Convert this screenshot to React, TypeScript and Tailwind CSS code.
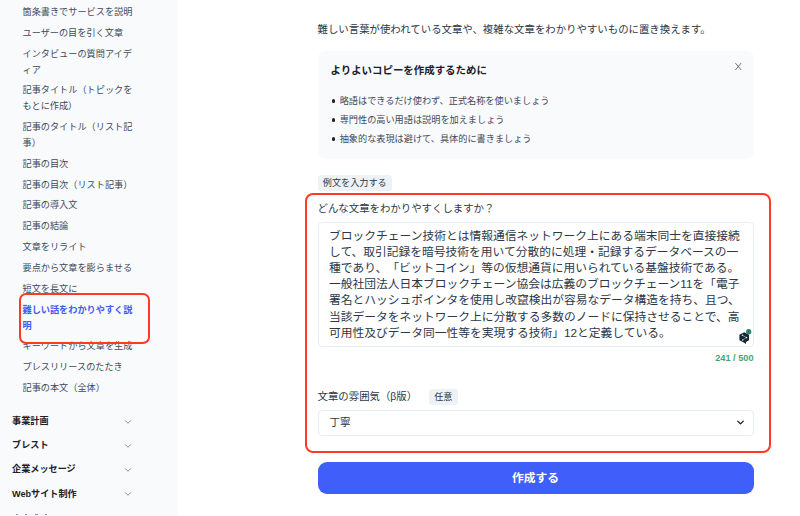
import { useState } from 'react';
import { ChevronDown } from 'lucide-react';

const menuItems = [
  ['箇条書きでサービスを説明'],
  ['ユーザーの目を引く文章'],
  ['インタビューの質問アイデ', 'ィア'],
  ['記事タイトル（トピックを', 'もとに作成）'],
  ['記事のタイトル（リスト記', '事）'],
  ['記事の目次'],
  ['記事の目次（リスト記事）'],
  ['記事の導入文'],
  ['記事の結論'],
  ['文章をリライト'],
  ['要点から文章を膨らませる'],
  ['短文を長文に'],
  ['難しい話をわかりやすく説', '明'],
  ['キーワードから文章を生成'],
  ['プレスリリースのたたき'],
  ['記事の本文（全体）'],
];

const menuGroups = ['事業計画', 'ブレスト', '企業メッセージ', 'Webサイト制作'];

const tips = [
  '略語はできるだけ使わず、正式名称を使いましょう',
  '専門性の高い用語は説明を加えましょう',
  '抽象的な表現は避けて、具体的に書きましょう',
];

const sampleText = [
  'ブロックチェーン技術とは情報通信ネットワーク上にある端末同士を直接接続',
  'して、取引記録を暗号技術を用いて分散的に処理・記録するデータベースの一',
  '種であり、「ビットコイン」等の仮想通貨に用いられている基盤技術である。',
  '一般社団法人日本ブロックチェーン協会は広義のブロックチェーン11を「電子',
  '署名とハッシュポインタを使用し改竄検出が容易なデータ構造を持ち、且つ、',
  '当該データをネットワーク上に分散する多数のノードに保持させることで、高',
  '可用性及びデータ同一性等を実現する技術」12と定義している。',
].join('\n');

const Sidebar = () => {
  const [active, setActive] = useState(12);

  return (
    <aside className="relative w-[178px] h-full shrink-0 overflow-hidden bg-[#f8fafc]">
      <ul className="pl-[22.5px] pt-[2.5px] text-[9.17px] leading-[15.7px] text-[#3f495a]">
        {menuItems.map((lines, index) => (
          <li
            key={index}
            onClick={() => setActive(index)}
            className={`py-[2.6px] whitespace-pre cursor-pointer ${
              active === index ? 'font-bold text-[#4059f5]' : ''
            }`}
          >
            {lines.join('\n')}
          </li>
        ))}
      </ul>

      <ul className="mt-[10.2px] pl-3 pr-[45px] text-[9.15px] font-bold text-[#1a202c]">
        {menuGroups.map((group) => (
          <li key={group} className="flex h-[24.2px] items-center justify-between whitespace-nowrap">
            {group}
            <ChevronDown className="size-[10px] text-[#718096]" strokeWidth={2.2} />
          </li>
        ))}
        {/* Top edge of the next group, cut by the viewport */}
        <li className="flex h-[24.2px] gap-[7.5px] pl-[3.5px] pt-[7.8px]">
          <span className="h-px w-0.5 bg-[#8b93a1]" />
          <span className="h-px w-0.5 bg-[#8b93a1]" />
          <span className="h-px w-[3px] bg-[#8b93a1]" />
          <span className="h-px w-0.5 bg-[#8b93a1]" />
        </li>
      </ul>

      {/* Highlight around the current item */}
      <div className="absolute left-[19px] top-[293px] h-[51px] w-[131px] rounded-[7px] border-2 border-[#ff3a22]" />
    </aside>
  );
};

const TipsCard = () => (
  <div className="mt-[11.5px] h-[108.5px] rounded-[7px] bg-[#f8fafc] pl-[13px] pr-[12px]">
    <div className="flex justify-between">
      <h2 className="mt-[12.5px] text-[10.45px] leading-4 font-bold text-[#1a202c]">よりよいコピーを作成するために</h2>
      <svg className="mt-3 h-[7px] w-[7px] overflow-visible" viewBox="0 0 7 7">
        <path d="M0.4 0 6.2 7M6.2 0 0.4 7" fill="none" stroke="#5b6472" strokeWidth="0.9" />
      </svg>
    </div>
    <ul className="mt-[12.5px] text-[9.17px] leading-[19px] text-[#3f495a]">
      {tips.map((tip) => (
        <li key={tip} className="flex items-center gap-[5px] pl-px">
          <span className="size-[3.2px] rounded-full bg-[#1a202c]" />
          {tip}
        </li>
      ))}
    </ul>
  </div>
);

const CopyForm = () => (
  <main className="w-[436px] ml-[139.5px] text-[#2d3748]">
    <p className="pt-5 text-[10.42px] leading-[19px] whitespace-nowrap">
      難しい言葉が使われている文章や、複雑な文章をわかりやすいものに置き換えます。
    </p>

    <TipsCard />

    <button className="mt-4 flex h-4 w-[74.5px] items-center justify-center rounded-[3px] bg-[#edf2f7] text-[9.15px] leading-4 whitespace-nowrap">
      例文を入力する
    </button>

    {/* Source text */}
    <label className="mt-[10px] block text-[10.42px] leading-4">どんな文章をわかりやすくしますか？</label>
    <div className="relative mt-[4.5px] h-[125px] rounded-[4px] border border-[#e9edf5] pl-[10.5px] pt-[5px] text-[11.75px] leading-[16.2px] whitespace-pre">
      {sampleText}
      <svg className="absolute right-[0.5px] bottom-[0.5px] h-[16px] w-[13px]" viewBox="0 0 13 16">
        <path d="M5.3 3.2 10 5.8v5.4L7 13v2L4.8 13.6.4 11.2V5.8Z" fill="#162636" />
        <path d="M3.5 6.3 7.5 8.6 3.7 11" fill="none" stroke="#a9b8c2" strokeWidth="0.6" />
        <circle cx="3.5" cy="6.3" r="0.8" fill="#d6dfe4" />
        <circle cx="7.5" cy="8.6" r="0.8" fill="#d6dfe4" />
        <circle cx="3.7" cy="11" r="0.8" fill="#d6dfe4" />
        <circle cx="9.7" cy="2.7" r="2.6" fill="#2f8068" />
      </svg>
    </div>
    <div className="mt-[3.5px] text-right text-[9.2px] leading-4 font-bold text-[#48a476]">241 / 500</div>

    {/* Tone */}
    <div className="mt-[22.5px] flex h-4 items-center">
      <label className="w-[111.5px] text-[10.42px] whitespace-nowrap">文章の雰囲気（β版）</label>
      <span className="flex h-4 w-[28.5px] items-center justify-center rounded-[3px] bg-[#edf2f7] text-[9.15px] leading-4">
        任意
      </span>
    </div>
    <div className="mt-[5px] flex h-[26px] items-center justify-between rounded-[4px] border border-[#e9edf5] pl-[11px] pr-[7px] text-[10.42px]">
      丁寧
      <ChevronDown className="size-[11px] text-[#1a202c]" strokeWidth={3} />
    </div>

    <button className="mt-[26px] flex h-8 w-full items-center justify-center rounded-[9px] bg-[#405efa] text-[11.75px] font-bold text-white">
      作成する
    </button>
  </main>
);

const App = () => {
  return (
    <div className="relative flex h-[516px] w-[800px] overflow-hidden bg-white font-['Liberation_Sans','Noto_Sans_CJK_JP',sans-serif] [text-spacing-trim:space-all]">
      <Sidebar />
      <CopyForm />

      {/* Highlight around the form fields */}
      <div className="absolute left-[304.5px] top-[193px] h-[260px] w-[466.5px] rounded-[8px] border-2 border-[#ff3a22]" />
    </div>
  );
};

export default App;
